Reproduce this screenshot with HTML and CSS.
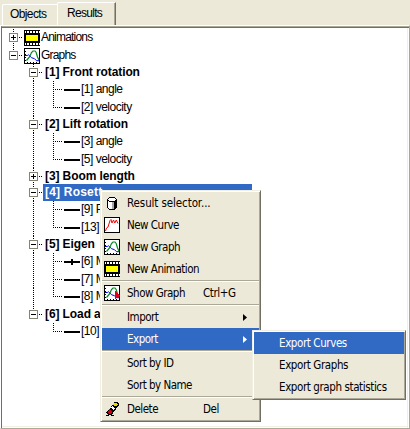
FILE: index.html
```
<!DOCTYPE html>
<html lang="en">
<head>
<meta charset="utf-8">
<title>Results</title>
<link rel="stylesheet" href="styles.css">
</head>
<body>
<svg class="defs" width="0" height="0">
  <defs>
    <symbol id="film" viewBox="0 0 16 16">
      <path d="M0 0h16v16H0z"/>
      <path fill="#fff" d="M1 1h1v2h-1zM3 1h2v2H3zM6 1h2v2H6zM9 1h2v2H9zM12 1h2v2h-2zM15 1h1v2h-1zM1 13h1v2h-1zM3 13h2v2H3zM6 13h2v2H6zM9 13h2v2H9zM12 13h2v2h-2zM15 13h1v2h-1z"/>
      <path fill="#ff0" d="M2 5h12v6H2z"/>
    </symbol>
    <symbol id="graph" viewBox="0 0 16 16">
      <path fill="#fff" stroke="#000" d="M.5.5h15v15H.5z"/>
      <path d="M1 3h1v1H1zM1 6h1v1H1zM1 9h1v1H1zM1 12h1v1H1zM3 14h1v1H3zM6 14h1v1H6zM9 14h1v1H9zM12 14h1v1h-1z"/>
      <g class="smooth">
        <path fill="none" stroke="#00f" d="M1 7.500h2.500l1-.8 3 3 3 1 2 2H15"/>
        <path fill="none" stroke="#008a20" stroke-width="1.200" d="M2.500 12.500l3-3.500 2-4.500 1.500-1.500h2l1.200 1.500 1.300 4.500L15 12"/>
      </g>
    </symbol>
    <symbol id="curve" viewBox="0 0 16 16">
      <path fill="#fff" stroke="#000" d="M.5.5h15v15H.5z"/>
      <path class="smooth" fill="none" stroke="#f00" d="M1.500 14l1-3 1.500-1L6 3.500l1-1 1 3.500 1.500-3 1.300 3 1.500-3L14 6.500"/>
    </symbol>
    <symbol id="cylinder" viewBox="0 0 16 16">
      <path d="M5 2h6v1h1v1h1v9h-1v1h-1v1H5v-1H4v-1H3V4h1V3h1z"/>
      <path fill="#fff" d="M5 3h6v1h1v1h-1v1H5V5H4V4h1zM4 6h1v1h3v7H5v-1H4z"/>
      <path fill="#aaa" d="M8 7h2v7H8z"/>
    </symbol>
    <symbol id="eraser" viewBox="0 0 16 16">
      <path d="M10 1h4v1h1v3h-1v1h-1v1h-1v2h-1v1h-1v1H9v2H8v1H4v-1H3v-3h1V9h1V8h1V7h1V5h1V4h1V3h1zM2 14h3v1H2zM7 14h3v1H7zM2 11h1v1H2z"/>
      <path fill="#e8d800" d="M10 2h3v1h1v1h-1v1h-3V4H9V3h1z"/>
      <path fill="#fff" d="M7 6h1V5h1v1h1v1h1v1h-1v1H9V8H8V7H7z"/>
      <path fill="#d00018" d="M5 8h1v1h1v1h1v2H7v1H5v-1H4v-2h1z"/>
    </symbol>
    <symbol id="show" viewBox="0 0 16 16">
      <use href="#graph"/>
      <path fill="#e00020" d="M11 6h1v1h1v1h1v1h1v1h1v1h-1v1h-2v1h-1v1h-1z"/>
    </symbol>
  </defs>
</svg>
<div class="window">
  <div class="tabs">
    <div class="tab">Objects</div>
    <div class="tab active">Results</div>
  </div>
  <div class="panel">
    <div class="tree">
      <div class="row root first"><i class="g t join"><b class="box plus"></b></i><svg class="ico"><use href="#film"/></svg><span>Animations</span></div>
      <div class="row root"><i class="g end join"><b class="box"></b></i><svg class="ico"><use href="#graph"/></svg><span>Graphs</span></div>
      <div class="row bold"><i class="g"></i><i class="g t join"><b class="box"></b></i><span>[1] Front rotation</span></div>
      <div class="row tall"><i class="g"></i><i class="g t"></i><i class="g t leaf"></i><i class="line"></i><span>[1] angle</span></div>
      <div class="row"><i class="g"></i><i class="g t"></i><i class="g end leaf"></i><i class="line"></i><span>[2] velocity</span></div>
      <div class="row bold"><i class="g"></i><i class="g t join"><b class="box"></b></i><span>[2] Lift rotation</span></div>
      <div class="row tall"><i class="g"></i><i class="g t"></i><i class="g t leaf"></i><i class="line"></i><span>[3] angle</span></div>
      <div class="row"><i class="g"></i><i class="g t"></i><i class="g end leaf"></i><i class="line"></i><span>[5] velocity</span></div>
      <div class="row bold short"><i class="g"></i><i class="g t join"><b class="box plus"></b></i><span>[3] Boom length</span></div>
      <div class="row bold selected"><i class="g"></i><i class="g t join"><b class="box"></b></i><span>[4] Rosett</span></div>
      <div class="row tall"><i class="g"></i><i class="g t"></i><i class="g t leaf"></i><i class="line"></i><span>[9] P</span></div>
      <div class="row"><i class="g"></i><i class="g t"></i><i class="g end leaf"></i><i class="line"></i><span>[13]</span></div>
      <div class="row bold"><i class="g"></i><i class="g t join"><b class="box"></b></i><span>[5] Eigen</span></div>
      <div class="row tall"><i class="g"></i><i class="g t"></i><i class="g t leaf"></i><i class="line mark"></i><span>[6] M</span></div>
      <div class="row"><i class="g"></i><i class="g t"></i><i class="g t leaf"></i><i class="line"></i><span>[7] M</span></div>
      <div class="row tall"><i class="g"></i><i class="g t"></i><i class="g end leaf"></i><i class="line"></i><span>[8] M</span></div>
      <div class="row bold"><i class="g"></i><i class="g end join"><b class="box"></b></i><span>[6] Load a</span></div>
      <div class="row"><i class="g"></i><i class="g"></i><i class="g end leaf"></i><i class="line"></i><span>[10]</span></div>
    </div>
  </div>
</div>
<div class="menu main">
  <div class="item"><svg class="ico"><use href="#cylinder"/></svg><span class="label dots">Result selector...</span></div>
  <div class="item"><svg class="ico"><use href="#curve"/></svg><span class="label">New Curve</span></div>
  <div class="item"><svg class="ico"><use href="#graph"/></svg><span class="label">New Graph</span></div>
  <div class="item"><svg class="ico"><use href="#film"/></svg><span class="label">New Animation</span></div>
  <div class="sep"></div>
  <div class="item"><svg class="ico"><use href="#show"/></svg><span class="label">Show Graph</span><span>Ctrl+G</span></div>
  <div class="sep"></div>
  <div class="item"><i class="ico"></i><span class="label">Import</span><i class="arrow"></i></div>
  <div class="item hot"><i class="ico"></i><span class="label">Export</span><i class="arrow"></i></div>
  <div class="sep"></div>
  <div class="item"><i class="ico"></i><span class="label">Sort by ID</span></div>
  <div class="item"><i class="ico"></i><span class="label">Sort by Name</span></div>
  <div class="sep"></div>
  <div class="item"><svg class="ico"><use href="#eraser"/></svg><span class="label">Delete</span><span>Del</span></div>
</div>
<div class="menu sub">
  <div class="item hot">Export Curves</div>
  <div class="item">Export Graphs</div>
  <div class="item">Export graph statistics</div>
</div>
</body>
</html>
```
FILE: styles.css
```
* { box-sizing: border-box; }
body {
  margin: 0;
  width: 410px;
  height: 429px;
  overflow: hidden;
  background: #ece9d8;
  color: #000;
  font: 12px/17px "Liberation Sans", sans-serif;
}
.defs { position: absolute; }
svg { shape-rendering: crispEdges; }
.smooth { shape-rendering: geometricPrecision; }
.window { display: flex; flex-direction: column; height: 429px; }
.tabs { display: flex; align-items: flex-end; height: 25px; padding-left: 2px; }
.tab {
  width: 55px;
  height: 21px;
  padding: 1px 0 0 7px;
  border-top: 1px solid #fff;
  border-left: 1px solid #fff;
  border-top-left-radius: 2px;
  letter-spacing: -0.6px;
}
.tab.active {
  width: 59px;
  height: 24px;
  margin-bottom: -1px;
  padding: 2px 0 0 9px;
  border-right: 1px solid #716f64;
  box-shadow: inset -1px 0 #aca899;
  background: #ece9d8;
  letter-spacing: -0.7px;
}
.panel {
  flex: 1;
  border: 1px solid #fff;
  border-right-color: #aca899;
  border-bottom-color: #aca899;
}
.tree {
  height: 100%;
  padding-left: 1px;
  background: #fff;
  border-top: 1px solid #aca899;
  border-left: 1px solid #716f64;
  box-shadow: inset 0 1px #716f64, inset -1px 0 #fff, inset -2px 0 #f1efe2, inset 0 -1px #fff, inset 0 -2px #f1efe2;
}
.row { display: flex; height: 17px; letter-spacing: -0.5px; white-space: nowrap; }
.row.root { height: 17px; letter-spacing: -0.8px; }
.row.first { height: 18px; margin-top: 2px; }
.row.tall { height: 18px; }
.row.short { height: 16px; }
.row.bold { font-weight: bold; letter-spacing: -0.1px; }
.row.selected { letter-spacing: 0.2px; }
.row span { padding-left: 1px; }
.row.bold span { padding-left: 2px; }
.row .ico { width: 16px; height: 16px; margin: 1px 0 0 1px; flex: none; }
.g { position: relative; flex: none; width: 20px; }
.g.t::before, .g.end::before {
  content: "";
  position: absolute;
  left: 10px;
  top: 0;
  bottom: 0;
  width: 1px;
  background: repeating-linear-gradient(#000 0 1px, transparent 1px 2px);
}
.g.end::before { bottom: auto; height: 9px; }
.g.join::after, .g.leaf::after {
  content: "";
  position: absolute;
  left: 10px;
  top: 8px;
  width: 9px;
  height: 1px;
  background: repeating-linear-gradient(90deg, #000 0 1px, transparent 1px 2px);
}
.box {
  position: absolute;
  z-index: 1;
  left: 6px;
  top: 4px;
  width: 9px;
  height: 9px;
  border: 1px solid #848472;
  background: linear-gradient(#000, #000) center / 5px 1px no-repeat #fff;
}
.box.plus { background: linear-gradient(#000, #000) center / 5px 1px no-repeat, linear-gradient(#000, #000) center / 1px 5px no-repeat #fff; }
.line { flex: none; width: 16px; height: 2px; margin: 8px 0 0 1px; background: #000; }
.line.mark { height: 6px; margin-top: 6px; background: linear-gradient(#000, #000) center / 16px 2px no-repeat, linear-gradient(#000, #000) center / 2px 6px no-repeat; }
.selected span { width: 209px; background: #316ac5; color: #fff; }
.menu {
  position: absolute;
  padding: 1px;
  border: 1px solid #f1efe2;
  border-right-color: #716f64;
  border-bottom-color: #716f64;
  background: #ece9d8;
  box-shadow: inset 1px 1px #fff, inset -1px -1px #aca899;
  font: 11.500px/23px "DejaVu Sans Condensed", sans-serif;
  letter-spacing: -0.4px;
}
.main { left: 100px; top: 190px; width: 161px; }
.sub { left: 252px; top: 330px; width: 154px; }
.item { display: flex; height: 22px; white-space: nowrap; }
.item .ico { flex: none; width: 16px; height: 16px; margin: 3px 7px 0 2px; }
.main .label { width: 76px; letter-spacing: -0.5px; }
.main .label.dots { width: auto; letter-spacing: -0.1px; }
.sub .item { padding-left: 25px; }
.hot { background: #316ac5; color: #fff; }
.sep { height: 2px; border-top: 1px solid #aca899; background: #fff; }
.arrow { width: 4px; height: 7px; margin: 8px 0 0 40px; background: currentColor; clip-path: polygon(0 0, 100% 50%, 0 100%); }
```
